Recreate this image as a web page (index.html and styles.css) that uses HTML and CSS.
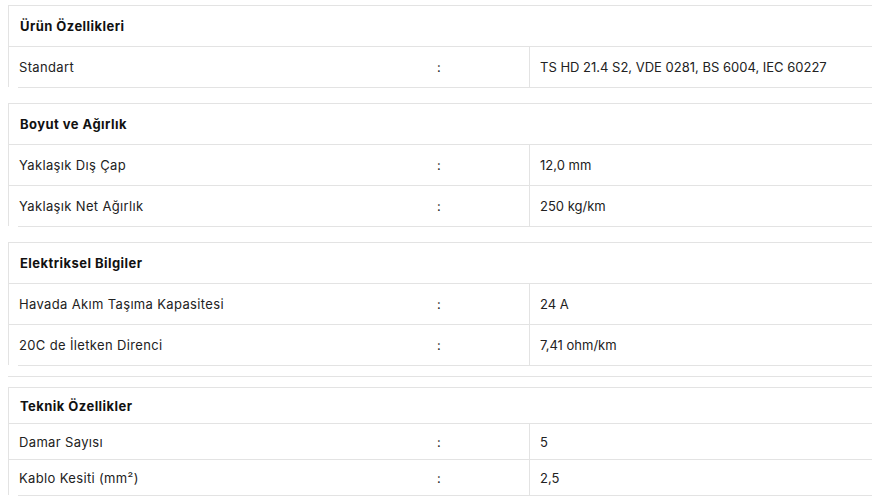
FILE: index.html
```html
<!DOCTYPE html>
<html lang="tr">
<head>
<meta charset="utf-8">
<title>Ürün Özellikleri</title>
<link rel="stylesheet" href="styles.css">
</head>
<body>
<div class="page">
  <section class="spec">
    <div class="spec-head">Ürün Özellikleri</div>
    <div class="spec-row last"><div class="lbl">Standart</div><div class="col">:</div><div class="val">TS HD 21.4 S2, VDE 0281, BS 6004, IEC 60227</div></div>
    <div class="spec-end"></div>
  </section>
  <section class="spec">
    <div class="spec-head">Boyut ve Ağırlık</div>
    <div class="spec-row"><div class="lbl">Yaklaşık Dış Çap</div><div class="col">:</div><div class="val">12,0 mm</div></div>
    <div class="spec-row last"><div class="lbl">Yaklaşık Net Ağırlık</div><div class="col">:</div><div class="val">250 kg/km</div></div>
    <div class="spec-end"></div>
  </section>
  <section class="spec spec-tight">
    <div class="spec-head">Elektriksel Bilgiler</div>
    <div class="spec-row"><div class="lbl">Havada Akım Taşıma Kapasitesi</div><div class="col">:</div><div class="val">24 A</div></div>
    <div class="spec-row last"><div class="lbl">20C de İletken Direnci</div><div class="col">:</div><div class="val">7,41 ohm/km</div></div>
    <div class="spec-end"></div>
  </section>
  <div class="divider"></div>
  <section class="spec spec-compact">
    <div class="spec-head">Teknik Özellikler</div>
    <div class="spec-row"><div class="lbl">Damar Sayısı</div><div class="col">:</div><div class="val">5</div></div>
    <div class="spec-row last"><div class="lbl">Kablo Kesiti (mm²)</div><div class="col">:</div><div class="val">2,5</div></div>
    <div class="spec-end"></div>
  </section>
</div>
</body>
</html>
```
FILE: styles.css
```css
html, body {
  margin: 0;
  padding: 0;
  background: #fff;
  overflow: hidden;
}
body {
  font-family: Inter, "Open Sans", "Liberation Sans", sans-serif;
  font-size: 13px;
  color: #222;
}
.page {
  width: 1300px;
  padding: 5px 0 0 8px;
}
.spec {
  border-top: 1px solid #e3e3e3;
  margin-bottom: 15px;
}
.spec-tight {
  margin-bottom: 10px;
}
.divider {
  border-top: 1px solid #e3e3e3;
  margin-bottom: 10px;
}
.spec-head {
  height: 40px;
  display: flex;
  align-items: center;
  padding-left: 11px;
  border-left: 1px solid #e3e3e3;
  border-bottom: 1px solid #e3e3e3;
  font-weight: 700;
  letter-spacing: 0.45px;
  color: #111;
}
.spec-row {
  display: grid;
  grid-template-columns: 418px 102px 1fr;
  height: 40px;
  border-left: 1px solid #e3e3e3;
  border-bottom: 1px solid #e3e3e3;
}
.spec-row.last {
  border-bottom: none;
}
.spec-compact .spec-head,
.spec-compact .spec-row {
  height: 35px;
}
.lbl, .col, .val {
  display: flex;
  align-items: center;
}
.lbl {
  padding-left: 10px;
  letter-spacing: 0.35px;
}
.col {
  padding-left: 10px;
}
.val {
  padding-left: 10px;
  border-left: 1px solid #e3e3e3;
}
.spec-end {
  margin-left: 10px;
  border-top: 1px solid #e3e3e3;
}
```
